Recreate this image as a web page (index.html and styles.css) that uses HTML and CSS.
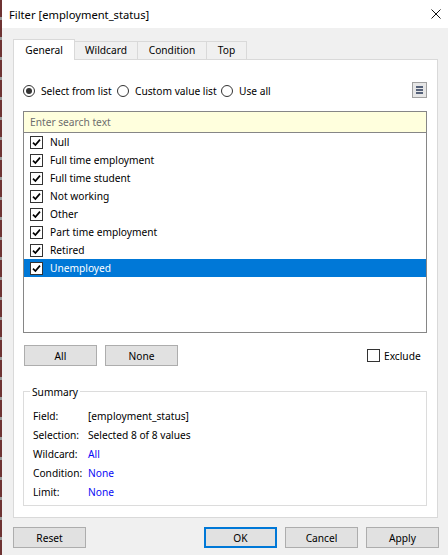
FILE: index.html
```html
<!DOCTYPE html>
<html>
<head>
<meta charset="utf-8">
<title>Filter [employment_status]</title>
<link rel="stylesheet" href="styles.css">
</head>
<body>
<div class="screen">
  <div class="strip"></div>
  <div class="window">
    <div class="titlebar">
      <span class="title">Filter [employment_status]</span>
      <svg class="close" viewBox="0 0 10 10" width="10" height="10"><path d="M0.5 0.5 L9.5 9.5 M9.5 0.5 L0.5 9.5" stroke="#111" stroke-width="1"/></svg>
    </div>
    <div class="content">
      <div class="tabs">
        <div class="tab active t-general">General</div>
        <div class="tab t-wildcard">Wildcard</div>
        <div class="tab t-condition">Condition</div>
        <div class="tab t-top">Top</div>
      </div>
      <div class="panel">
        <div class="mode-row">
          <div class="opt opt1"><span class="radio checked"></span>Select from list</div>
          <div class="opt opt2"><span class="radio"></span>Custom value list</div>
          <div class="opt"><span class="radio"></span>Use all</div>
          <span class="menu-btn"><svg viewBox="0 0 13 14" width="13" height="14"><rect x="3" y="3" width="7" height="2" fill="#56627a"/><rect x="3" y="6" width="7" height="2" fill="#56627a"/><rect x="3" y="9" width="7" height="2" fill="#56627a"/></svg></span>
        </div>
        <div class="search">Enter search text</div>
        <div class="list">
          <div class="item"><span class="cb"><svg viewBox="0 0 11 11" width="11" height="11"><path d="M2 5.6 L4.4 8 L9 2.6" fill="none" stroke="#000" stroke-width="1.7"/></svg></span>Null</div>
          <div class="item"><span class="cb"><svg viewBox="0 0 11 11" width="11" height="11"><path d="M2 5.6 L4.4 8 L9 2.6" fill="none" stroke="#000" stroke-width="1.7"/></svg></span>Full time employment</div>
          <div class="item"><span class="cb"><svg viewBox="0 0 11 11" width="11" height="11"><path d="M2 5.6 L4.4 8 L9 2.6" fill="none" stroke="#000" stroke-width="1.7"/></svg></span>Full time student</div>
          <div class="item"><span class="cb"><svg viewBox="0 0 11 11" width="11" height="11"><path d="M2 5.6 L4.4 8 L9 2.6" fill="none" stroke="#000" stroke-width="1.7"/></svg></span>Not working</div>
          <div class="item"><span class="cb"><svg viewBox="0 0 11 11" width="11" height="11"><path d="M2 5.6 L4.4 8 L9 2.6" fill="none" stroke="#000" stroke-width="1.7"/></svg></span>Other</div>
          <div class="item"><span class="cb"><svg viewBox="0 0 11 11" width="11" height="11"><path d="M2 5.6 L4.4 8 L9 2.6" fill="none" stroke="#000" stroke-width="1.7"/></svg></span>Part time employment</div>
          <div class="item"><span class="cb"><svg viewBox="0 0 11 11" width="11" height="11"><path d="M2 5.6 L4.4 8 L9 2.6" fill="none" stroke="#000" stroke-width="1.7"/></svg></span>Retired</div>
          <div class="item sel"><span class="cb"><svg viewBox="0 0 11 11" width="11" height="11"><path d="M2 5.6 L4.4 8 L9 2.6" fill="none" stroke="#000" stroke-width="1.7"/></svg></span>Unemployed</div>
        </div>
        <div class="btn-row">
          <div class="btn b-all">All</div>
          <div class="btn b-none">None</div>
          <div class="exclude"><span class="cb empty"></span>Exclude</div>
        </div>
        <div class="summary">
          <div class="summary-title">Summary</div>
          <div class="srow"><span class="k">Field:</span><span class="v">[employment_status]</span></div>
          <div class="srow"><span class="k">Selection:</span><span class="v">Selected 8 of 8 values</span></div>
          <div class="srow"><span class="k">Wildcard:</span><span class="v link">All</span></div>
          <div class="srow"><span class="k">Condition:</span><span class="v link">None</span></div>
          <div class="srow"><span class="k">Limit:</span><span class="v link">None</span></div>
        </div>
      </div>
      <div class="footer">
        <div class="btn">Reset</div>
        <div class="btn default b-ok">OK</div>
        <div class="btn b-gap">Cancel</div>
        <div class="btn b-gap">Apply</div>
      </div>
    </div>
  </div>
</div>
</body>
</html>
```
FILE: styles.css
```css
html, body { margin: 0; padding: 0; }
.screen {
  display: flex;
  width: 448px;
  height: 555px;
  overflow: hidden;
  background: #f0f0f0;
  font-family: "Noto Sans", "Open Sans", sans-serif;
  font-size: 10.2px;
  color: #000;
}
.strip {
  width: 2px;
  flex: none;
  background: repeating-linear-gradient(to bottom, #6e3333 0 17px, #9a9a9a 17px 20px);
}
.window { flex: 1; display: flex; flex-direction: column; }
.titlebar {
  height: 28px;
  flex: none;
  background: #fff;
  display: flex;
  align-items: center;
  padding: 0 7px;
}
.title { flex: 1; font-size: 11.2px; }
.close { display: block; }
.content { padding: 11px 0 0 11px; }
.tabs { display: flex; align-items: flex-start; height: 20px; }
.tab {
  box-sizing: border-box;
  height: 18px;
  margin-top: 2px;
  margin-left: -1px;
  border: 1px solid #d9d9d9;
  border-bottom: 0;
  background: #f0f0f0;
  text-align: center;
  line-height: 17px;
}
.tab.active {
  height: 21px;
  margin-top: 0;
  margin-left: 0;
  background: #fff;
  position: relative;
  z-index: 1;
  line-height: 21px;
}
.t-general { width: 62px; }
.t-wildcard { width: 64px; }
.t-condition { width: 70px; }
.t-top { width: 41px; }
.panel {
  box-sizing: border-box;
  width: 425px;
  height: 459px;
  border: 1px solid #d9d9d9;
  background: #fff;
  padding: 22px 10px 0 9px;
  display: flex;
  flex-direction: column;
}
.mode-row { display: flex; align-items: center; height: 18px; flex: none; }
.opt { display: flex; align-items: center; }
.opt1 { width: 94px; }
.opt2 { width: 104px; }
.radio {
  box-sizing: border-box;
  width: 12px;
  height: 12px;
  border: 1px solid #333;
  border-radius: 50%;
  margin-right: 6px;
  display: flex;
  align-items: center;
  justify-content: center;
  background: #fff;
}
.radio.checked::after {
  content: "";
  width: 6px;
  height: 6px;
  border-radius: 50%;
  background: #333;
}
.menu-btn {
  margin-left: auto;
  align-self: flex-start;
  box-sizing: border-box;
  width: 15px;
  height: 16px;
  border: 1px solid #a0a0a0;
  background: #e6e6e6;
}
.menu-btn svg { display: block; }
.search {
  margin-top: 11px;
  box-sizing: border-box;
  height: 22px;
  flex: none;
  border: 1px solid #868686;
  background: #ffffdd;
  color: #6d6d6d;
  padding-left: 6px;
  line-height: 20px;
}
.list {
  box-sizing: border-box;
  height: 200px;
  flex: none;
  border: 1px solid #868686;
  border-top: 0;
}
.item {
  height: 18px;
  display: flex;
  align-items: center;
  padding-left: 6px;
}
.item.sel { background: #0078d7; color: #fff; }
.cb {
  box-sizing: border-box;
  width: 13px;
  height: 13px;
  flex: none;
  border: 1px solid #333;
  background: #fff;
  margin-right: 7px;
}
.cb svg { display: block; }
.btn-row { display: flex; align-items: center; height: 21px; margin-top: 12px; flex: none; }
.btn {
  box-sizing: border-box;
  width: 73px;
  height: 21px;
  flex: none;
  border: 1px solid #adadad;
  background: #e1e1e1;
  display: flex;
  align-items: center;
  justify-content: center;
}
.b-all { margin-left: 1px; }
.b-none { margin-left: 8px; }
.exclude { display: flex; align-items: center; margin-left: 189px; }
.exclude .cb { margin-right: 4px; }
.summary {
  position: relative;
  box-sizing: border-box;
  height: 115px;
  flex: none;
  margin-top: 25px;
  border: 1px solid #dcdcdc;
  padding: 14px 0 0 9px;
}
.summary-title {
  position: absolute;
  left: 6px;
  top: -7px;
  padding: 0 2px;
  line-height: 14px;
  background: #fff;
}
.srow { display: flex; align-items: center; height: 19px; }
.k { width: 55px; flex: none; }
.link { color: #0a0af5; }
.footer { display: flex; margin-top: 9px; }
.btn.default { border: 2px solid #0078d7; }
.b-ok { margin-left: 118px; }
.b-gap { margin-left: 8px; }
```
